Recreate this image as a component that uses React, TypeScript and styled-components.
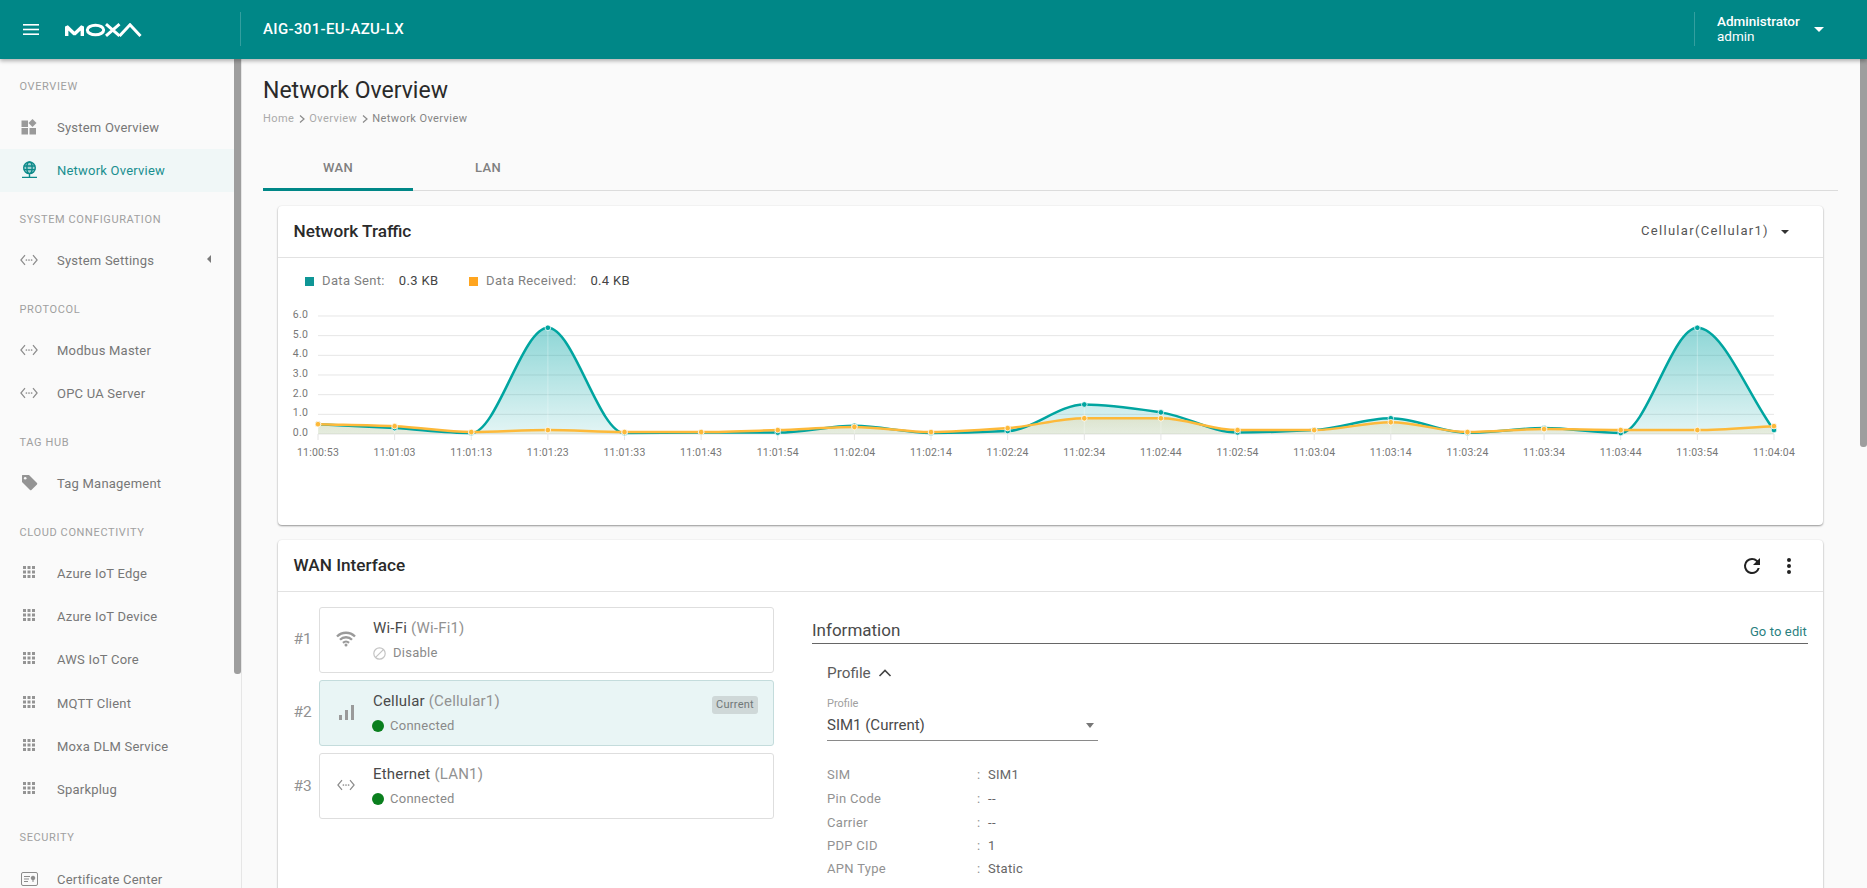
import React from "react";
import styled, { createGlobalStyle } from "styled-components";

const Global = createGlobalStyle`
  html, body { margin: 0; padding: 0; height: 100%; overflow: hidden; background: #fafafa; }
  body { font-family: Roboto, "Liberation Sans", sans-serif; color: #333; }
  #root { height: 888px; }
  * { box-sizing: border-box; }
`;

const Page = styled.div`position: relative; width: 1867px; height: 888px; overflow: hidden; background: #fafafa;`;
const Header = styled.header`
  position: absolute; left: 0; top: 0; right: 0; height: 59px; background: #008787; z-index: 5;
  box-shadow: 0 2px 4px rgba(0,0,0,.3); color: #fff;
`;
const Burger = styled.svg`position: absolute; left: 19px; top: 17px;`;
const Logo = styled.svg`position: absolute; left: 65px; top: 22.5px;`;
const HeaderDivider = styled.div<{ $x: number }>`position: absolute; left: ${p => p.$x}px; top: 12px; width: 1px; height: 34px; background: rgba(255,255,255,.2);`;
const ProductName = styled.div`position: absolute; left: 263px; top: 19px; font-size: 15px; font-weight: 500; line-height: 20px; letter-spacing: .35px;`;
const UserBox = styled.div`position: absolute; left: 1717px; top: 14px; font-size: 13.5px; line-height: 15px;`;
const UserRole = styled.div`font-weight: 500;`;
const UserArrow = styled.div`position: absolute; left: 1814px; top: 27px; width: 0; height: 0; border-left: 5px solid transparent; border-right: 5px solid transparent; border-top: 5px solid #fff;`;

const Sidebar = styled.aside`
  position: absolute; left: 0; top: 59px; width: 242px; height: 829px; background: #fafafa; border-right: 1px solid #e6e6e6;
`;
const ThumbLeft = styled.div`position: absolute; left: 234px; top: 59px; width: 7px; height: 615px; background: #9e9e9e; border-radius: 0 0 3px 3px; z-index: 2;`;
const ThumbRight = styled.div`position: absolute; left: 1860px; top: 59px; width: 7px; height: 388px; background: #9e9e9e; border-radius: 0 0 3px 3px; z-index: 2;`;
const SectionLabel = styled.div<{ $y: number }>`
  position: absolute; left: 19.5px; top: ${p => p.$y - 7}px; line-height: 16px; font-size: 11px; letter-spacing: .62px; color: #a0a0a0; white-space: nowrap;
`;
const NavItem = styled.div<{ $y: number; $active?: boolean }>`
  position: absolute; left: 0; top: ${p => p.$y - 21.5}px; width: 234px; height: 43px; display: flex; align-items: center;
  background: ${p => (p.$active ? "#f0f7f7" : "transparent")}; color: ${p => (p.$active ? "#1a8f8f" : "#777")};
`;
const NavIcon = styled.span`position: absolute; left: 17px; top: 9px; width: 24px; height: 24px; display: flex; align-items: center; justify-content: center;`;
const NavText = styled.span`position: absolute; left: 57px; top: 12.5px; line-height: 20px; font-size: 13px; letter-spacing: .22px; white-space: nowrap;`;
const NavCaret = styled.span`position: absolute; left: 207px; top: 16px; width: 0; height: 0; border-top: 4px solid transparent; border-bottom: 4px solid transparent; border-right: 4px solid #7a7a7a;`;

const PageTitle = styled.h1`position: absolute; left: 263px; top: 76px; margin: 0; font-size: 23px; font-weight: 400; line-height: 30px; color: #2a2a2a; white-space: nowrap;`;
const Crumbs = styled.div`position: absolute; left: 263px; top: 111px; display: flex; align-items: center; font-size: 11px; line-height: 16px; letter-spacing: .42px; color: #aaa; white-space: nowrap;`;
const CrumbSep = styled.svg`margin: 0 3.5px;`;
const CrumbLast = styled.span`color: #858585;`;
const TabBar = styled.div`position: absolute; left: 263px; top: 146px; width: 1575px; height: 45px; border-bottom: 1px solid #dcdcdc;`;
const Tab = styled.div<{ $x: number; $active?: boolean }>`
  position: absolute; left: ${p => p.$x}px; top: 0; width: 150px; height: 45px; padding-top: 14px; text-align: center; font-size: 13px; font-weight: 500; line-height: 16px; letter-spacing: .3px; color: #808080;
  border-bottom: ${p => (p.$active ? "3px solid #008787" : "none")};
`;
const Card = styled.section<{ $top: number; $height: number }>`
  position: absolute; left: 278px; top: ${p => p.$top}px; width: 1545px; height: ${p => p.$height}px; background: #fff; border-radius: 4px;
  box-shadow: 0 1px 2px rgba(0,0,0,.4), 0 0 2px rgba(0,0,0,.06);
`;
const CardHead = styled.div`position: absolute; left: 0; right: 0; top: 0; height: 52px; border-bottom: 1px solid #e2e2e2;`;
const CardTitle = styled.h2`position: absolute; left: 15.5px; top: 14px; margin: 0; font-size: 17.2px; font-weight: 500; line-height: 22px; color: #2a2a2a; white-space: nowrap;`;
const CardSelect = styled.div`position: absolute; left: 1363px; top: 16px; font-size: 13px; line-height: 18px; letter-spacing: 1.3px; color: #555; white-space: nowrap;`;
const CardSelectArrow = styled.div`position: absolute; left: 1503px; top: 24px; width: 0; height: 0; border-left: 4px solid transparent; border-right: 4px solid transparent; border-top: 4px solid #333;`;
const Legend = styled.div<{ $x: number }>`position: absolute; left: ${p => p.$x}px; top: 66px; display: flex; align-items: center; font-size: 13px; line-height: 18px; letter-spacing: .35px; color: #808080; white-space: nowrap;`;
const LegendDot = styled.i<{ $c: string }>`width: 9px; height: 9px; background: ${p => p.$c}; margin-right: 8px;`;
const LegendValue = styled.b`font-weight: 400; color: #444; margin-left: 14px;`;
const Chart = styled.svg`position: absolute; left: 0; top: 0;`;
const AxisText = styled.text`font-family: Roboto, sans-serif; font-size: 10.5px; fill: #777; letter-spacing: .2px;`;
const HeadIcon = styled.svg<{ $x: number }>`position: absolute; left: ${p => p.$x}px; top: 14px;`;

const RowNum = styled.div<{ $y: number }>`position: absolute; left: 293.5px; top: ${p => p.$y - 10}px; font-size: 15.5px; line-height: 20px; color: #929292;`;
const IfaceCard = styled.div<{ $y: number; $on?: boolean }>`
  position: absolute; left: 319px; top: ${p => p.$y}px; width: 455px; height: 66px; border-radius: 3px;
  border: 1px solid ${p => (p.$on ? "#c4dcdc" : "#dedede")}; background: ${p => (p.$on ? "#e9f5f5" : "#fff")};
`;
const IfaceIcon = styled.span`position: absolute; left: 14px; top: 19px; width: 24px; height: 24px; display: flex; align-items: center; justify-content: center;`;
const IfaceName = styled.div`position: absolute; left: 53px; top: 10px; font-size: 15px; line-height: 20px; letter-spacing: .2px; color: #4a4a4a; white-space: nowrap;`;
const IfaceSub = styled.span`color: #929292;`;
const IfaceState = styled.div`position: absolute; left: 52px; top: 36px; display: flex; align-items: center; font-size: 13px; line-height: 18px; letter-spacing: .25px; color: #8a8a8a; white-space: nowrap;`;
const Dot = styled.i`width: 12px; height: 12px; border-radius: 50%; background: #0a7f1e; margin-right: 6px;`;
const DisableIcon = styled.svg`margin: 0 7px 0 1px;`;
const Chip = styled.div`position: absolute; right: 15px; top: 15px; width: 46px; height: 18px; border-radius: 3px; background: #cfd8d8; font-size: 11px; line-height: 18px; text-align: center; letter-spacing: .25px; color: #6f7777;`;
const InfoTitle = styled.div`position: absolute; left: 812px; top: 618px; width: 996px; height: 26px; border-bottom: 1px solid #666; font-size: 17px; line-height: 24px; color: #4a4a4a;`;
const EditLink = styled.div`position: absolute; right: 1px; top: 5px; font-size: 13px; line-height: 18px; color: #2a8080; letter-spacing: .12px;`;
const ProfileHead = styled.div`position: absolute; left: 827px; top: 663px; display: flex; align-items: center; font-size: 15.3px; line-height: 20px; color: #5c5c5c;`;
const ProfileChevron = styled.svg`margin-left: 7px;`;
const FieldLabel = styled.div`position: absolute; left: 827px; top: 696px; font-size: 11px; line-height: 16px; color: #a0a0a0;`;
const SelectBox = styled.div`position: absolute; left: 827px; top: 714px; width: 271px; height: 27px; border-bottom: 1px solid #8a8a8a; font-size: 15px; line-height: 22px; color: #4a4a4a;`;
const SelectArrow = styled.div`position: absolute; right: 4px; top: 9px; width: 0; height: 0; border-left: 4.5px solid transparent; border-right: 4.5px solid transparent; border-top: 5px solid #777;`;
const KV = styled.div<{ $y: number }>`position: absolute; left: 827px; top: ${p => p.$y - 9}px; width: 300px; height: 18px; font-size: 13px; line-height: 18px; letter-spacing: .3px; color: #929292;`;
const KVColon = styled.span`position: absolute; left: 150px;`;
const KVValue = styled.span`position: absolute; left: 161px; color: #666;`;

const Tilde = ({ c = "#8c8c8c" }: { c?: string }) => (
  <svg width="18" height="12" viewBox="0 0 18 12" fill="none" stroke={c} strokeWidth="1.2">
    <path d="M5 1.2.9 6 5 10.8M13 1.2 17.1 6 13 10.8" />
    <circle cx="6.4" cy="6" r=".85" fill={c} stroke="none" />
    <circle cx="9" cy="6" r=".85" fill={c} stroke="none" />
    <circle cx="11.6" cy="6" r=".85" fill={c} stroke="none" />
  </svg>
);
const Grid9 = () => (
  <svg width="13" height="13" viewBox="0 0 13 13" fill="#949494">
    {[0, 4.5, 9].flatMap(x => [0, 4.5, 9].map(y => <rect key={`${x}-${y}`} x={x} y={y} width="3" height="3" />))}
  </svg>
);
const Dash = () => (
  <svg width="16" height="16" viewBox="0 0 16 16" fill="#9a9a9a">
    <rect x=".5" y="1.5" width="6.5" height="6.5" />
    <rect x=".5" y="9" width="6.5" height="6.5" />
    <rect x="8.5" y="9" width="6.5" height="6.5" />
    <path d="M11.5 0 15.5 4 11.5 8 7.5 4z" />
  </svg>
);
const Globe = () => (
  <svg width="17" height="18" viewBox="0 0 17 18" fill="none" stroke="#0d8a8a" strokeWidth="1.4">
    <circle cx="8.5" cy="6.8" r="5.8" fill="#0d8a8a" fillOpacity=".35" />
    <ellipse cx="8.5" cy="6.8" rx="2.6" ry="5.8" />
    <path d="M2.7 5h11.6M2.7 8.6h11.6M8.5 12.6V16M1 16.4h15" />
  </svg>
);
const Tag = () => (
  <svg width="17" height="17" viewBox="0 0 17 17" fill="#949494">
    <path d="M1 1.5C1 1.2 1.2 1 1.5 1H8l8 8c.4.4.4 1 0 1.4L10.4 16c-.4.4-1 .4-1.4 0L1 8z" />
    <circle cx="4.2" cy="4.2" r="1.3" fill="#fafafa" />
  </svg>
);
const Cert = () => (
  <svg width="17" height="14" viewBox="0 0 17 14" fill="none" stroke="#8c8c8c" strokeWidth="1">
    <rect x=".5" y=".5" width="16" height="13" rx="1.5" />
    <path d="M3 4.5h6M3 7h5M3 9.5h4" />
    <circle cx="12" cy="6" r="1.8" fill="#8c8c8c" />
    <path d="M12 7.5v2.5" />
  </svg>
);

type IconKind = "dash" | "globe" | "code" | "tag" | "grid" | "cert";
const navIcon = (k: IconKind) =>
  k === "dash" ? <Dash /> : k === "globe" ? <Globe /> : k === "code" ? <Tilde /> : k === "tag" ? <Tag /> : k === "grid" ? <Grid9 /> : <Cert />;

const sections = [
  { t: "OVERVIEW", y: 86 },
  { t: "SYSTEM CONFIGURATION", y: 219 },
  { t: "PROTOCOL", y: 309 },
  { t: "TAG HUB", y: 442 },
  { t: "CLOUD CONNECTIVITY", y: 532 },
  { t: "SECURITY", y: 837 },
];
const items: { t: string; y: number; i: IconKind; active?: boolean; caret?: boolean }[] = [
  { t: "System Overview", y: 127, i: "dash" },
  { t: "Network Overview", y: 170, i: "globe", active: true },
  { t: "System Settings", y: 260, i: "code", caret: true },
  { t: "Modbus Master", y: 350, i: "code" },
  { t: "OPC UA Server", y: 393, i: "code" },
  { t: "Tag Management", y: 483, i: "tag" },
  { t: "Azure IoT Edge", y: 573, i: "grid" },
  { t: "Azure IoT Device", y: 616, i: "grid" },
  { t: "AWS IoT Core", y: 659, i: "grid" },
  { t: "MQTT Client", y: 703, i: "grid" },
  { t: "Moxa DLM Service", y: 746, i: "grid" },
  { t: "Sparkplug", y: 789, i: "grid" },
  { t: "Certificate Center", y: 879, i: "cert" },
];

const times = ["11:00:53","11:01:03","11:01:13","11:01:23","11:01:33","11:01:43","11:01:54","11:02:04","11:02:14","11:02:24","11:02:34","11:02:44","11:02:54","11:03:04","11:03:14","11:03:24","11:03:34","11:03:44","11:03:54","11:04:04"];
const sent = [0.5,0.3,0.05,5.4,0.05,0.08,0.07,0.42,0.05,0.15,1.5,1.1,0.08,0.2,0.8,0.06,0.3,0.05,5.4,0.2];
const recv = [0.5,0.4,0.1,0.2,0.1,0.1,0.2,0.36,0.1,0.3,0.8,0.8,0.2,0.2,0.6,0.1,0.25,0.2,0.2,0.4];
const X0 = 40, DX = 76.63, Y0 = 228, UNIT = 19.67;
const px = (i: number) => X0 + i * DX;
const py = (v: number) => Y0 - v * UNIT;
function curve(vals: number[]) {
  const ys = vals.map(py);
  const d = ys.slice(1).map((y, i) => (y - ys[i]) / DX);
  const m = ys.map((_, i) => {
    if (i === 0) return d[0];
    if (i === ys.length - 1) return d[d.length - 1];
    if (d[i - 1] * d[i] <= 0) return 0;
    return (2 * d[i - 1] * d[i]) / (d[i - 1] + d[i]);
  });
  let p = `M${px(0)} ${ys[0]}`;
  for (let i = 0; i < ys.length - 1; i++) {
    const h = DX / 3;
    p += `C${px(i) + h} ${ys[i] + m[i] * h} ${px(i + 1) - h} ${ys[i + 1] - m[i + 1] * h} ${px(i + 1)} ${ys[i + 1]}`;
  }
  return p;
}
const area = (v: number[]) => `${curve(v)}L${px(19)} ${Y0}L${px(0)} ${Y0}Z`;

const TrafficChart = () => (
  <Chart width="1545" height="260" viewBox="0 0 1545 260">
    <defs>
      <linearGradient id="gs" x1="0" y1="120" x2="0" y2="228" gradientUnits="userSpaceOnUse">
        <stop offset="0" stopColor="#00a3a3" stopOpacity=".45" />
        <stop offset="1" stopColor="#00a3a3" stopOpacity=".11" />
      </linearGradient>
      <linearGradient id="gr" x1="0" y1="120" x2="0" y2="228" gradientUnits="userSpaceOnUse">
        <stop offset="0" stopColor="#ffa51f" stopOpacity=".5" />
        <stop offset="1" stopColor="#ffa51f" stopOpacity=".1" />
      </linearGradient>
    </defs>
    {[0, 1, 2, 3, 4, 5, 6].map(v => (
      <g key={v}>
        <line x1={X0} x2={px(19)} y1={py(v)} y2={py(v)} stroke="#e6e6e6" strokeWidth="1" />
        <AxisText x={X0 - 10} y={py(v) + 2} textAnchor="end">{v.toFixed(1)}</AxisText>
      </g>
    ))}
    <path d={area(sent)} fill="url(#gs)" />
    <path d={area(recv)} fill="url(#gr)" />
    {times.map((t, i) => (
      <g key={t}>
        <line x1={px(i)} x2={px(i)} y1={py(sent[i])} y2={Y0} stroke="#fff" strokeOpacity=".3" />
        <line x1={px(i)} x2={px(i)} y1={Y0} y2={Y0 + 6} stroke="#e4e4e4" />
        <AxisText x={px(i)} y={Y0 + 22} textAnchor="middle">{t}</AxisText>
      </g>
    ))}
    <path d={curve(sent)} fill="none" stroke="#00a5a0" strokeWidth="2.5" />
    <path d={curve(recv)} fill="none" stroke="#fdb93a" strokeWidth="2.5" />
    {sent.map((v, i) => <circle key={i} cx={px(i)} cy={py(v)} r="2.8" fill="#00a5a0" stroke="#fff" strokeOpacity=".85" strokeWidth=".9" />)}
    {recv.map((v, i) => <circle key={i} cx={px(i)} cy={py(v)} r="2.8" fill="#fdb93a" stroke="#fff" strokeOpacity=".85" strokeWidth=".9" />)}
  </Chart>
);

export default function App() {
  return (
    <Page>
      <Global />
      <Header>
        <Burger width="24" height="24" viewBox="0 0 24 24" fill="#fff">
          <rect x="4" y="7" width="16" height="1.6" />
          <rect x="4" y="11.7" width="16" height="1.6" />
          <rect x="4" y="16.4" width="16" height="1.6" />
        </Burger>
        <Logo width="77" height="14" viewBox="0 0 77 14" fill="none" stroke="#fff">
          <path d="M1.7 13V3.5L9.5 11 17.3 3.5V13" strokeWidth="3.4" strokeLinejoin="bevel" />
          <ellipse cx="30.5" cy="7" rx="8.2" ry="4.8" strokeWidth="3" />
          <path d="M41 1.2 54.5 12.8M54.5 1.2 41 12.8" strokeWidth="3" />
          <path d="M54.5 13 65 1.8 75.5 13" strokeWidth="3" />
        </Logo>
        <HeaderDivider $x={240} />
        <ProductName>AIG-301-EU-AZU-LX</ProductName>
        <HeaderDivider $x={1694} />
        <UserBox>
          <UserRole>Administrator</UserRole>
          <div>admin</div>
        </UserBox>
        <UserArrow />
      </Header>

      <Sidebar />
      <ThumbLeft />
      {sections.map(s => <SectionLabel key={s.t} $y={s.y}>{s.t}</SectionLabel>)}
      {items.map(it => (
        <NavItem key={it.t} $y={it.y} $active={it.active}>
          <NavIcon>{navIcon(it.i)}</NavIcon>
          <NavText>{it.t}</NavText>
          {it.caret && <NavCaret />}
        </NavItem>
      ))}
      <ThumbRight />

      <PageTitle>Network Overview</PageTitle>
      <Crumbs>
        Home
        <CrumbSep width="8" height="10" viewBox="0 0 8 10" fill="none" stroke="#8a8a8a" strokeWidth="1.2"><path d="M2 1.5 6 5 2 8.5" /></CrumbSep>
        Overview
        <CrumbSep width="8" height="10" viewBox="0 0 8 10" fill="none" stroke="#8a8a8a" strokeWidth="1.2"><path d="M2 1.5 6 5 2 8.5" /></CrumbSep>
        <CrumbLast>Network Overview</CrumbLast>
      </Crumbs>
      <TabBar>
        <Tab $x={0} $active>WAN</Tab>
        <Tab $x={150}>LAN</Tab>
      </TabBar>

      <Card $top={206} $height={319}>
        <CardHead>
          <CardTitle>Network Traffic</CardTitle>
          <CardSelect>Cellular(Cellular1)</CardSelect>
          <CardSelectArrow />
        </CardHead>
        <Legend $x={27}><LegendDot $c="#0f9696" />Data Sent:<LegendValue>0.3 KB</LegendValue></Legend>
        <Legend $x={191}><LegendDot $c="#ffa51f" />Data Received:<LegendValue>0.4 KB</LegendValue></Legend>
        <TrafficChart />
      </Card>

      <Card $top={540} $height={400}>
        <CardHead>
          <CardTitle>WAN Interface</CardTitle>
          <HeadIcon $x={1462} width="24" height="24" viewBox="0 0 24 24" fill="#222">
            <path d="M17.65 6.35A7.958 7.958 0 0 0 12 4a8 8 0 1 0 7.73 10h-2.08A5.99 5.99 0 0 1 12 18a6 6 0 1 1 0-12c1.66 0 3.14.69 4.22 1.78L13 11h7V4z" />
          </HeadIcon>
          <HeadIcon $x={1499} width="24" height="24" viewBox="0 0 24 24" fill="#222">
            <path d="M12 8a2 2 0 1 0 0-4 2 2 0 0 0 0 4zm0 2a2 2 0 1 0 0 4 2 2 0 0 0 0-4zm0 6a2 2 0 1 0 0 4 2 2 0 0 0 0-4z" />
          </HeadIcon>
        </CardHead>
      </Card>

      <RowNum $y={639}>#1</RowNum>
      <IfaceCard $y={607}>
        <IfaceIcon>
          <svg width="20" height="16" viewBox="0 0 20 16" fill="none" stroke="#9a9a9a" strokeWidth="2.3">
            <path d="M1 5.5c5-5 13-5 18 0M4 8.7c3.3-3.3 8.7-3.3 12 0M7 11.8c1.7-1.6 4.3-1.6 6 0" />
            <circle cx="10" cy="14" r="1.5" fill="#9a9a9a" stroke="none" />
          </svg>
        </IfaceIcon>
        <IfaceName>Wi-Fi <IfaceSub>(Wi-Fi1)</IfaceSub></IfaceName>
        <IfaceState>
          <DisableIcon width="13" height="13" viewBox="0 0 13 13" fill="none" stroke="#c4c4c4" strokeWidth="1.2"><circle cx="6.5" cy="6.5" r="5.7" /><path d="M2.6 10.4 10.4 2.6" /></DisableIcon>
          Disable
        </IfaceState>
      </IfaceCard>
      <RowNum $y={712}>#2</RowNum>
      <IfaceCard $y={680} $on>
        <IfaceIcon>
          <svg width="15" height="15" viewBox="0 0 15 15" fill="#9a9a9a"><rect x="0" y="10" width="3" height="5" /><rect x="6" y="5" width="3" height="10" /><rect x="12" y="0" width="3" height="15" /></svg>
        </IfaceIcon>
        <IfaceName>Cellular <IfaceSub>(Cellular1)</IfaceSub></IfaceName>
        <IfaceState><Dot />Connected</IfaceState>
        <Chip>Current</Chip>
      </IfaceCard>
      <RowNum $y={786}>#3</RowNum>
      <IfaceCard $y={753}>
        <IfaceIcon><Tilde c="#8c8c8c" /></IfaceIcon>
        <IfaceName>Ethernet <IfaceSub>(LAN1)</IfaceSub></IfaceName>
        <IfaceState><Dot />Connected</IfaceState>
      </IfaceCard>

      <InfoTitle>Information<EditLink>Go to edit</EditLink></InfoTitle>
      <ProfileHead>Profile
        <ProfileChevron width="14" height="10" viewBox="0 0 14 10" fill="none" stroke="#444" strokeWidth="1.6"><path d="M1.5 8 7 2.5 12.5 8" /></ProfileChevron>
      </ProfileHead>
      <FieldLabel>Profile</FieldLabel>
      <SelectBox>SIM1 (Current)<SelectArrow /></SelectBox>
      <KV $y={775}>SIM<KVColon>:</KVColon><KVValue>SIM1</KVValue></KV>
      <KV $y={799}>Pin Code<KVColon>:</KVColon><KVValue>--</KVValue></KV>
      <KV $y={823}>Carrier<KVColon>:</KVColon><KVValue>--</KVValue></KV>
      <KV $y={846}>PDP CID<KVColon>:</KVColon><KVValue>1</KVValue></KV>
      <KV $y={869}>APN Type<KVColon>:</KVColon><KVValue>Static</KVValue></KV>
    </Page>
  );
}
